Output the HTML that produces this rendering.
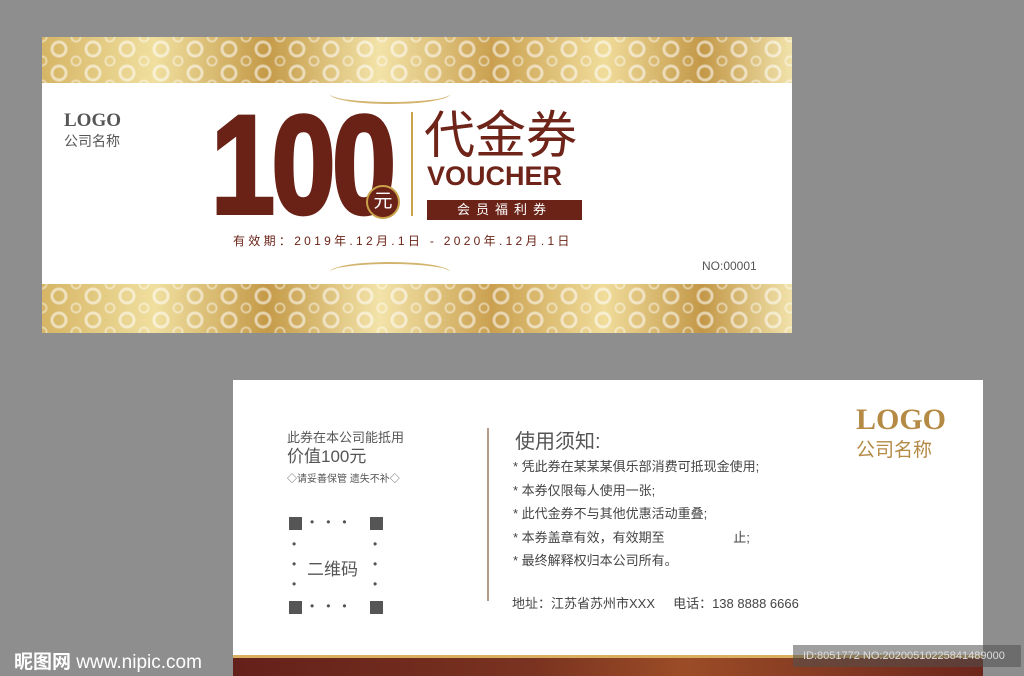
<!DOCTYPE html>
<html><head><meta charset="utf-8"><style>
*{margin:0;padding:0;box-sizing:border-box}
body{width:1024px;height:676px;background:#8e8e8e;position:relative;overflow:hidden;font-family:"Liberation Sans","Noto Sans CJK SC",sans-serif}
.abs{position:absolute}
.card{background:#fff}
.gold{background:
 radial-gradient(circle at 50% 50%,transparent 0 5px,rgba(255,255,255,.55) 6px 8px,transparent 9px) 0 0/34px 24px,
 radial-gradient(circle at 50% 50%,transparent 0 3px,rgba(255,255,255,.45) 4px 5px,transparent 6px) 17px 12px/34px 24px,
 linear-gradient(90deg,#d6b565,#f0df9f 15%,#c49a48 30%,#f3e3a8 45%,#caa050 60%,#f0dc9a 75%,#c39848 88%,#f1e2aa)}
</style></head><body>
<div class="abs card" style="left:42px;top:37px;width:750px;height:296px"></div>
<div class="abs gold" style="left:42px;top:37px;width:750px;height:46px"></div>
<div class="abs gold" style="left:42px;top:284px;width:750px;height:49px"></div>
<div class="abs" style="left:330px;top:84px;width:120px;height:20px;border-bottom:2px solid #c9a24a;border-radius:0 0 50% 50%;opacity:.8"></div>
<div class="abs" style="left:330px;top:262px;width:120px;height:20px;border-top:2px solid #c9a24a;border-radius:50% 50% 0 0;opacity:.8"></div>
<div class="abs" style="left:64px;top:110px;font-size:19px;font-weight:bold;color:#555;font-family:'Liberation Serif',serif">LOGO</div>
<div class="abs" style="left:64px;top:131px;font-size:14px;color:#555">公司名称</div>
<div class="abs" style="left:211px;top:95px;font-size:140px;font-weight:bold;letter-spacing:-4px;line-height:140px;transform:scaleX(0.82);transform-origin:left;color:#6a2217;-webkit-text-stroke:4px #6a2217">100</div>
<div class="abs" style="left:366px;top:185px;width:34px;height:34px;border-radius:50%;border:2px solid #c9a24a;background:#6b2318;color:#fff;font-size:19px;text-align:center;line-height:30px">元</div>
<div class="abs" style="left:411px;top:112px;width:2px;height:104px;background:#c9a24a"></div>
<div class="abs" style="left:424px;top:108px;font-size:51px;line-height:56px;color:#6e2419">代金券</div>
<div class="abs" style="left:427px;top:161px;font-size:27px;font-weight:bold;color:#6e2419">VOUCHER</div>
<div class="abs" style="left:427px;top:200px;width:155px;height:20px;background:#6b2318;color:#fff;font-size:13px;text-align:center;line-height:20px;letter-spacing:6px">会员福利券</div>
<div class="abs" style="left:233px;top:232px;font-size:12px;color:#6b2318;letter-spacing:3.3px;white-space:nowrap">有效期：2019年.12月.1日 - 2020年.12月.1日</div>
<div class="abs" style="left:702px;top:259px;font-size:12px;color:#555">NO:00001</div>

<div class="abs card" style="left:233px;top:380px;width:750px;height:296px"></div>
<div class="abs" style="left:233px;top:655px;width:750px;height:21px;background:linear-gradient(90deg,#64201a,#7a3320 40%,#9b4c27 60%,#6d261b);border-top:3px solid #d8b060"></div>
<div class="abs" style="left:287px;top:427px;font-size:13px;color:#555">此券在本公司能抵用</div>
<div class="abs" style="left:287px;top:442px;font-size:17px;color:#555">价值100元</div>
<div class="abs" style="left:287px;top:470px;font-size:10px;color:#555">◇请妥善保管 遗失不补◇</div>
<div class="abs" style="left:289px;top:517px;width:13px;height:13px;background:#555"></div>
<div class="abs" style="left:370px;top:517px;width:13px;height:13px;background:#555"></div>
<div class="abs" style="left:289px;top:601px;width:13px;height:13px;background:#555"></div>
<div class="abs" style="left:370px;top:601px;width:13px;height:13px;background:#555"></div>
<div class="abs" style="left:310px;top:515px;font-size:12px;color:#555;letter-spacing:12px">•••</div>
<div class="abs" style="left:310px;top:599px;font-size:12px;color:#555;letter-spacing:12px">•••</div>
<div class="abs" style="left:292px;top:534px;font-size:12px;color:#555;line-height:20px">•<br>•<br>•</div>
<div class="abs" style="left:373px;top:534px;font-size:12px;color:#555;line-height:20px">•<br>•<br>•</div>
<div class="abs" style="left:307px;top:555px;font-size:17px;color:#555">二维码</div>
<div class="abs" style="left:487px;top:428px;width:2px;height:173px;background:#b79a8a"></div>
<div class="abs" style="left:515px;top:425px;font-size:20px;color:#555">使用须知:</div>
<div class="abs" style="left:513px;top:455px;font-size:13px;color:#444;line-height:23.5px">* 凭此券在某某某俱乐部消费可抵现金使用;<br>* 本券仅限每人使用一张;<br>* 此代金券不与其他优惠活动重叠;<br>* 本券盖章有效，有效期至 &nbsp; &nbsp; &nbsp; &nbsp; &nbsp; &nbsp; &nbsp; &nbsp; &nbsp; 止;<br>* 最终解释权归本公司所有。</div>
<div class="abs" style="left:512px;top:593px;font-size:13px;color:#444">地址：江苏省苏州市XXX &nbsp; &nbsp; 电话：138 8888 6666</div>
<div class="abs" style="left:856px;top:403px;font-size:30px;font-weight:bold;color:#b48a45;font-family:'Liberation Serif',serif">LOGO</div>
<div class="abs" style="left:856px;top:435px;font-size:19px;color:#b48a45">公司名称</div>
<div class="abs" style="left:14px;top:647px;font-size:19px;font-weight:bold;color:#fff">昵图网 <span style="font-weight:normal">www.nipic.com</span></div>
<div class="abs" style="left:793px;top:645px;width:228px;height:22px;background:rgba(80,80,80,.55);color:#ddd;font-size:11px;line-height:22px;padding-left:10px">ID:8051772 NO:20200510225841489000</div>
</body></html>
